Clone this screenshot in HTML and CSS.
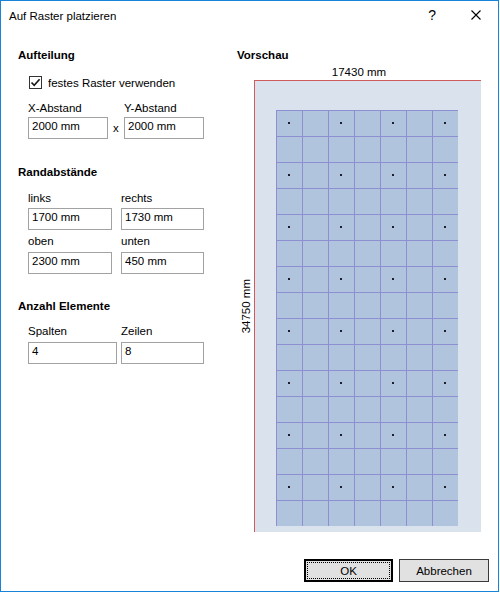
FILE: index.html
```html
<!DOCTYPE html>
<html lang="de">
<head>
<meta charset="utf-8">
<title>Auf Raster platzieren</title>
<link rel="stylesheet" href="styles.css">
</head>
<body>
<div class="dialog">
  <div class="titlebar">
    <span class="title">Auf Raster platzieren</span>
    <span class="help">?</span>
    <svg class="close" width="10" height="10" viewBox="0 0 10 10"><path d="M0.5 0.5L9.5 9.5M9.5 0.5L0.5 9.5" stroke="#000" stroke-width="1.1" fill="none"/></svg>
  </div>
  <div class="main">
    <div class="left">
      <div class="heading">Aufteilung</div>
      <label class="check-row">
        <span class="checkbox"><svg width="11" height="11" viewBox="0 0 11 11"><path d="M1.5 5.5L4.2 8.3L9.6 2.3" stroke="#1a1a1a" stroke-width="1.7" fill="none"/></svg></span>
        <span>festes Raster verwenden</span>
      </label>
      <div class="pair pair-xy">
        <div class="col c80"><div class="lbl">X-Abstand</div><input class="field" type="text" value="2000 mm" readonly></div>
        <div class="times">x</div>
        <div class="col c80"><div class="lbl">Y-Abstand</div><input class="field" type="text" value="2000 mm" readonly></div>
      </div>

      <div class="heading heading-rand">Randabstände</div>
      <div class="pair pair-rand1">
        <div class="col c84"><div class="lbl">links</div><input class="field" type="text" value="1700 mm" readonly></div>
        <div class="col c83 gap9"><div class="lbl">rechts</div><input class="field" type="text" value="1730 mm" readonly></div>
      </div>
      <div class="pair pair-rand2">
        <div class="col c84"><div class="lbl">oben</div><input class="field" type="text" value="2300 mm" readonly></div>
        <div class="col c83 gap9"><div class="lbl">unten</div><input class="field" type="text" value="450 mm" readonly></div>
      </div>

      <div class="heading heading-count">Anzahl Elemente</div>
      <div class="pair pair-count">
        <div class="col c89"><div class="lbl">Spalten</div><input class="field" type="text" value="4" readonly></div>
        <div class="col c83 gap4"><div class="lbl">Zeilen</div><input class="field" type="text" value="8" readonly></div>
      </div>
    </div>

    <div class="right">
      <div class="heading">Vorschau</div>
      <div class="dim-top">17430 mm</div>
      <div class="preview-row">
        <div class="dim-side"><span class="vtext">34750 mm</span></div>
        <svg class="preview" width="227" height="452" viewBox="0 0 227 452">
          <defs>
            <pattern id="cell" x="22" y="30" width="26" height="26" patternUnits="userSpaceOnUse">
              <rect width="26" height="26" fill="#b0c4de"/>
              <path d="M0.5 0V26M0 0.5H26" stroke="#8e8ed2" stroke-width="1" fill="none"/>
            </pattern>
            <pattern id="dots" x="22" y="30" width="52" height="52" patternUnits="userSpaceOnUse">
              <rect x="12" y="12" width="2" height="2" fill="#1e1e2a"/>
            </pattern>
          </defs>
          <rect x="0" y="0" width="227" height="452" fill="#dae2ed"/>
          <path d="M0.5 0V452M0 0.5H227" stroke="#cf5b5b" stroke-width="1" fill="none"/>
          <rect x="22" y="30" width="182" height="416" fill="url(#cell)"/>
          <rect x="22" y="30" width="182" height="416" fill="url(#dots)"/>
        </svg>
      </div>
    </div>
  </div>
  <div class="footer">
    <button class="btn btn-ok" type="button">OK</button>
    <button class="btn btn-cancel" type="button">Abbrechen</button>
  </div>
</div>
</body>
</html>
```
FILE: styles.css
```css
* {
  box-sizing: border-box;
}

html,
body {
  margin: 0;
  padding: 0;
  background: #fff;
}

body {
  font-family: "Liberation Sans", Arial, sans-serif;
  font-size: 11.5px;
  line-height: 14px;
  color: #000;
}

.dialog {
  width: 499px;
  height: 592px;
  border: 1px solid #1883d7;
  background: #fff;
  display: flex;
  flex-direction: column;
}

/* title bar */
.titlebar {
  height: 30px;
  flex: none;
  display: flex;
  align-items: flex-start;
  padding: 8px 17px 0 8px;
}

.title {
  flex: 1;
}

.help {
  font-size: 14px;
  line-height: 12px;
}

.close {
  display: block;
  margin-left: 35px;
  margin-top: 1px;
}

/* main area */
.main {
  flex: 1;
  display: flex;
}

.left {
  width: 236px;
  padding-left: 17px;
  padding-top: 17px;
}

.heading {
  font-weight: bold;
}

.heading-rand {
  margin-top: 26px;
}

.heading-count {
  margin-top: 25px;
}

.check-row {
  display: flex;
  align-items: flex-start;
  height: 14px;
  margin: 14px 0 0 11px;
}

.checkbox {
  width: 13px;
  height: 13px;
  border: 1px solid #333;
  background: #fff;
  display: flex;
  margin-right: 6px;
}

.checkbox svg {
  display: block;
}

.pair {
  display: flex;
  margin-left: 10px;
}

.col {
  flex: none;
}

.c80 { width: 80px; }
.c83 { width: 83px; }
.c84 { width: 84px; }
.c89 { width: 89px; }

.gap9 { margin-left: 9px; }
.gap4 { margin-left: 4px; }

.times {
  width: 16px;
  padding-left: 5px;
  padding-top: 20px;
}

.lbl {
  white-space: nowrap;
}

.field {
  display: block;
  width: 100%;
  height: 22px;
  margin: 0;
  border: 1px solid #a2a2a2;
  background: #fff;
  padding: 0 3px 4px 3px;
  font: inherit;
  color: #000;
  outline: none;
}

.pair-xy { margin-top: 11px; }
.pair-xy .field { margin-top: 2px; }

.pair-rand1 { margin-top: 12px; }
.pair-rand1 .field { margin-top: 3px; }

.pair-rand2 { margin-top: 4px; }
.pair-rand2 .field { margin-top: 4px; }

.pair-count { margin-top: 11px; }
.pair-count .field { margin-top: 4px; }

/* preview */
.right {
  width: 244px;
  padding-top: 17px;
  display: flex;
  flex-direction: column;
}

.dim-top {
  margin-top: 3px;
  text-align: center;
}

.preview-row {
  display: flex;
  margin-top: 1px;
}

.dim-side {
  width: 17px;
  display: flex;
  align-items: center;
  justify-content: center;
}

.vtext {
  writing-mode: vertical-rl;
  transform: rotate(180deg);
  white-space: nowrap;
}

.preview {
  display: block;
  flex: none;
}

/* footer */
.footer {
  height: 32px;
  flex: none;
  display: flex;
  justify-content: flex-end;
  align-items: flex-start;
  gap: 6px;
  padding: 0 9px 9px 0;
}

.btn {
  height: 23px;
  padding: 0;
  margin: 0;
  font: inherit;
  line-height: 14px;
  color: #000;
  background: #e1e1e1;
  border: 1px solid #3a3a3a;
}

.btn-ok {
  width: 89px;
  border: 2px solid #000;
  outline: 1px dotted #000;
  outline-offset: -4px;
}

.btn-cancel {
  width: 90px;
}
```
